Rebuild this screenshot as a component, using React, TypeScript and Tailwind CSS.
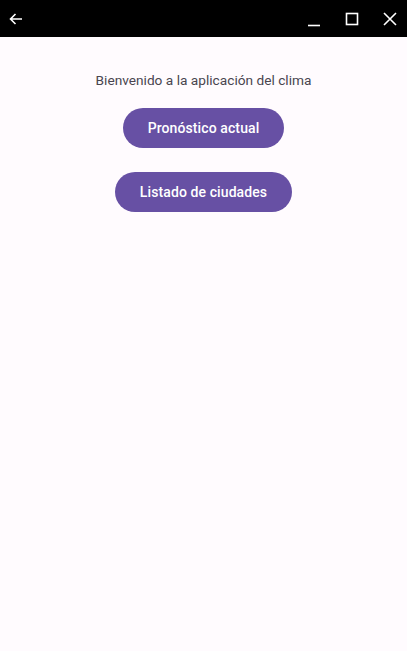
import React from "react";

const App = () => {
  return (
    <div className="min-h-[651px] w-full bg-[#fffbfe] font-['Roboto',sans-serif]">
      {/* Window bar */}
      <div className="flex h-[37px] items-center justify-between bg-black px-[8px] text-white">
        <svg width="16" height="16" viewBox="0 0 16 16" fill="none" stroke="currentColor" strokeWidth="1.6">
          <path d="M14 8H2.5M7.5 3L2.5 8l5 5" />
        </svg>
        <div className="flex items-center gap-[22px] pr-[1px]">
          <svg width="16" height="16" viewBox="0 0 16 16" fill="none" stroke="currentColor" strokeWidth="1.6">
            <path d="M2 14.5h12" />
          </svg>
          <svg width="16" height="16" viewBox="0 0 16 16" fill="none" stroke="currentColor" strokeWidth="1.6">
            <rect x="2.5" y="2.5" width="11" height="11" />
          </svg>
          <svg width="16" height="16" viewBox="0 0 16 16" fill="none" stroke="currentColor" strokeWidth="1.6">
            <path d="M2 2l12 12M14 2L2 14" />
          </svg>
        </div>
      </div>

      <div className="flex flex-col items-center pt-[33px]">
        <p className="text-[13.7px] leading-[20px] text-[#49454f]">Bienvenido a la aplicación del clima</p>
        <button className="mt-[18px] h-[40px] rounded-full bg-[#6750a4] px-[25px] text-[14px] font-medium tracking-[0.1px] text-white">
          Pronóstico actual
        </button>
        <button className="mt-[24px] h-[40px] rounded-full bg-[#6750a4] px-[25px] text-[14px] font-medium tracking-[0.1px] text-white">
          Listado de ciudades
        </button>
      </div>
    </div>
  );
};

export default App;
